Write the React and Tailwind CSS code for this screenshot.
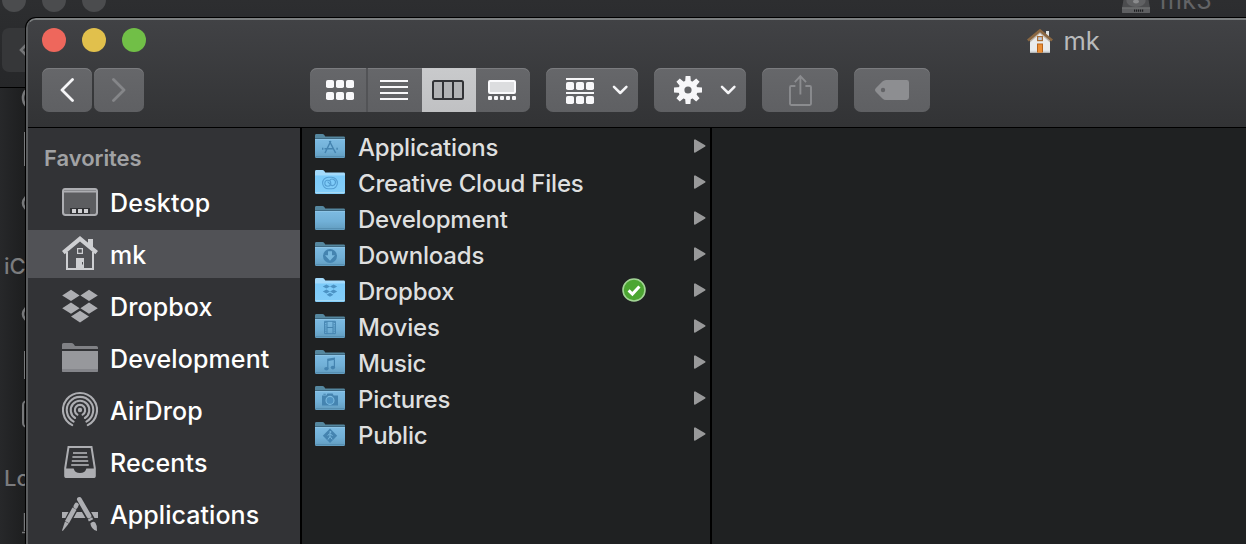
import React from "react";

const deep = "#4584b0";

const glyphs = {
  apps: (
    <g stroke={deep} strokeWidth="1.5" fill="none">
      <path d="M15.8 7 10 19M14.4 7 20.6 19M9.5 14.8h8.5" />
      <path d="M7 14.8h1.4M21.4 14.8h1.4" strokeWidth="2" />
    </g>
  ),
  cloud: (
    <g stroke="#559fd3" strokeWidth="1.1" fill="none">
      <rect x="7.6" y="7.2" width="14.8" height="11.6" rx="5.8" />
      <circle cx="12.8" cy="13.2" r="3" />
      <path d="M12.6 11.6 16.4 15.4A3.2 3.2 0 1 0 14.6 10.6" />
    </g>
  ),
  none: null,
  down: (
    <g>
      <circle cx="15" cy="14" r="7" fill={deep} />
      <path d="M13 9.2h4v4h3L15 18.8 10 13.2h3z" fill="#78b8de" />
    </g>
  ),
  dropbox: (
    <path
      d="M11.4 6.6 15 8.6 11.4 10.6 7.8 8.6zM18.6 6.6 22.2 8.6 18.6 10.6 15 8.6zM11.4 11.4 15 13.4 11.4 15.4 7.8 13.4zM18.6 11.4 22.2 13.4 18.6 15.4 15 13.4zM15 14.8 18.4 16.8 15 18.8 11.6 16.8z"
      fill="#4c93c4"
    />
  ),
  film: (
    <g fill="none" stroke={deep}>
      <path d="M9.6 7.3h10.8v12.4H9.6zM12 7.3v12.4M18 7.3v12.4M12 13.5h6" strokeWidth="1" />
      <path d="M10.8 8v11.4M19.2 8v11.4" strokeWidth="1.2" strokeDasharray="1 1.2" />
    </g>
  ),
  music: (
    <g fill={deep}>
      <path d="M12.2 8.8 20 7.4v2.4l-6.6 1.2v8h-1.2zM18.8 8h1.2v9.6h-1.2z" />
      <ellipse cx="11.4" cy="18.8" rx="2.2" ry="1.8" />
      <ellipse cx="17.9" cy="17.6" rx="2.2" ry="1.8" />
    </g>
  ),
  camera: (
    <g>
      <path d="M7 9.4h4.4l1-1.8h5.2l1 1.8H23v10.2H7zM8.4 7.8h2.4v1H8.4z" fill={deep} />
      <circle cx="15" cy="14.4" r="4" fill="#4f93c2" stroke="#7bbbe0" strokeWidth="1.1" />
    </g>
  ),
  sign: (
    <g>
      <path d="M15 6.6 22.2 13.8 15 21 7.8 13.8z" fill={deep} />
      <circle cx="15.4" cy="10" r="1" fill="#78b8de" />
      <path d="M15 11.4v3l-2 3.2M15 14.4l2.2 3M12.6 13.4l2.2-1.6 2.8 1.8" stroke="#78b8de" strokeWidth="1" fill="none" />
    </g>
  ),
};

function Folder({ kind, bright }) {
  return (
    <svg width="30" height="25" viewBox="0 0 30 25" className="block shrink-0">
      <defs>
        <linearGradient id="dim" x1="0" y1="0" x2="0" y2="1">
          <stop offset="0" stopColor="#7dbbe2" />
          <stop offset="0.55" stopColor="#71b0d7" />
          <stop offset="1" stopColor="#629cbf" />
        </linearGradient>
        <linearGradient id="lit" x1="0" y1="0" x2="0" y2="1">
          <stop offset="0" stopColor="#7ccbfa" />
          <stop offset="1" stopColor="#83cdf8" />
        </linearGradient>
      </defs>
      <path
        d="M0 1.4Q0 0 1.4 0H7.4Q8.6 0 9.3 1L10.3 2.6H28.8Q30 2.6 30 3.8V10H0z"
        fill={bright ? "#a3dafb" : "#55879f"}
      />
      {!bright && <path d="M0 4.2H30V5H0z" fill="#38617a" />}
      <path d="M0 5H30V22.8Q30 24 28.8 24H1.2Q0 24 0 22.8z" fill={bright ? "url(#lit)" : "url(#dim)"} />
      <path d="M0 5.5H30" stroke={bright ? "#8ed2fb" : "#8cc4e6"} strokeWidth="1" />
      <path d="M0.4 22.5H29.6" stroke={bright ? "#a6d9f4" : "#568fb2"} strokeWidth="1" />
      {glyphs[kind]}
    </svg>
  );
}

const g = "#adaeb2";

const sideIcons = {
  desktop: (
    <g>
      <rect x="1" y="11" width="34" height="26" rx="2.4" fill="#5c5d60" stroke={g} strokeWidth="2" />
      <path d="M1 12.2Q1 10.4 3 10.4H33Q35 10.4 35 12.2V14.6H1z" fill={g} />
      <path d="M2 12.5H34" stroke="#8b8c90" />
      <path d="M8 30H28V36H8z" fill="#323336" />
      <path d="M10 31h4v4h-4zM16 31h4v4h-4zM22 31h4v4h-4z" fill="#d0d0d3" />
    </g>
  ),
  home: (
    <g fill="#cecfd2">
      <path d="M18 6 36 21 33.4 24.2 18 11.6 2.6 24.2 0 21z" />
      <path d="M26 9h5v10l-5-4.4z" />
      <path d="M4 22h2v16h24V22h2v18H4z" />
      <path d="M15 18h6v6h-6zM16.2 19.2v3.6h3.6v-3.6z" fillRule="evenodd" />
      <path d="M14 28h8v11h-8z" />
      <path d="M20 32h1v2.4h-1z" fill="#505155" />
    </g>
  ),
  dropbox: (
    <path
      d="M9 7.8 17.6 13.4 9 19 0.2 13.4zM27 7.8 35.8 13.4 27 19 18.4 13.4zM9 20.6 17.6 26.2 9 31.8 0.2 26.2zM27 20.6 35.8 26.2 27 31.8 18.4 26.2zM18 28.8 27 34.6 18 40.4 9 34.6z"
      fill={g}
    />
  ),
  folder: (
    <g>
      <path d="M0 10.6Q0 9 1.6 9H9.4Q10.6 9 11.6 10L13 12H34.4Q36 12 36 13.6V15H0z" fill="#808185" />
      <path d="M0 17H36V36.4Q36 38 34.4 38H1.6Q0 38 0 36.4z" fill="#97989c" />
      <path d="M0 35H36V36.4Q36 38 34.4 38H1.6Q0 38 0 36.4z" fill="#84858a" />
    </g>
  ),
  airdrop: (
    <g fill="none" stroke={g} strokeWidth="2.1" strokeLinecap="round">
      <circle cx="18" cy="24" r="2.2" fill={g} stroke="none" />
      <path d="M15.4 28.6A5.2 5.2 0 1 1 20.6 28.6" />
      <path d="M13.1 32A9.3 9.3 0 1 1 22.9 32" />
      <path d="M11.6 35.6A13.2 13.2 0 1 1 24.4 35.6" />
      <path d="M10.2 39.1A17 17 0 1 1 25.8 39.1" />
    </g>
  ),
  recents: (
    <g>
      <path d="M6.5 9H29.5L32.8 30V38.2Q32.8 39 32 39H4Q3.2 39 3.2 38.2V30z" fill="none" stroke={g} strokeWidth="2" />
      <path d="M3 30.4H11.6Q13 35 18 35T24.4 30.4H33V38.6Q33 40 31.6 40H4.4Q3 40 3 38.6z" fill={g} />
      <path d="M11 15H25M10.4 19H25.6M9.8 23H26.2M9.2 27H26.8" stroke="#97989c" strokeWidth="2" />
    </g>
  ),
  apps: (
    <g>
      <path d="M0 22H36V28H0z" fill={g} />
      <g stroke="#323336" strokeWidth="7.6" strokeLinecap="round">
        <path d="M14.5 15 4.5 34" />
        <path d="M18 10 31 33" />
      </g>
      <path d="M12 15 18 17.5 25 30H7z" fill="#323336" />
      <path d="M11 22H23.5L26 28H8z" fill={g} />
      <g stroke="#323336" strokeWidth="6.6">
        <path d="M13.6 17.5 5 33" />
        <path d="M18 12 29 31" />
      </g>
      <path d="M12.5 18.6 5 32.2" stroke={g} strokeWidth="4.6" />
      <path d="M14.6 14.8 13.6 16.6" stroke={g} strokeWidth="4.4" strokeLinecap="round" />
      <path d="M3 31.4 6.8 33.6 1.2 40.6Q0 41.4 0.2 40z" fill={g} />
      <path d="M17.4 9.4 27 26" stroke={g} strokeWidth="4.8" strokeLinecap="round" />
      <path d="M28 28.4 29 30.4" stroke={g} strokeWidth="4.8" />
      <path d="M28.4 33.4Q31 30.6 33.4 32.8 35.6 36 35 41 29 39 28.4 33.4z" fill={g} />
    </g>
  ),
};

const sidebar = [
  { name: "Desktop", icon: "desktop", track: "tracking-[0.2px]" },
  { name: "mk", icon: "home", active: true, track: "tracking-[0px]" },
  { name: "Dropbox", icon: "dropbox", track: "tracking-[0.1px]" },
  { name: "Development", icon: "folder", track: "tracking-[0.12px]" },
  { name: "AirDrop", icon: "airdrop", track: "tracking-[0.1px]" },
  { name: "Recents", icon: "recents", track: "tracking-[0.15px]" },
  { name: "Applications", icon: "apps", track: "tracking-[0.06px]" },
];

const files = [
  { name: "Applications", kind: "apps" },
  { name: "Creative Cloud Files", kind: "cloud", bright: true },
  { name: "Development", kind: "none" },
  { name: "Downloads", kind: "down" },
  { name: "Dropbox", kind: "dropbox", bright: true, synced: true },
  { name: "Movies", kind: "film" },
  { name: "Music", kind: "music" },
  { name: "Pictures", kind: "camera" },
  { name: "Public", kind: "sign" },
];

const btn =
  "flex h-11 shrink-0 items-center rounded-[7px] bg-linear-to-b from-[#66676a] to-[#5f6063] shadow-[inset_0_1px_0_#7b7c7f]";

function Chevron() {
  return (
    <svg width="16" height="10" viewBox="0 0 16 10" className="block">
      <path d="M2 1.8 8.2 8 14.4 1.8" fill="none" stroke="#f5f5f7" strokeWidth="2.5" strokeLinecap="round" strokeLinejoin="round" />
    </svg>
  );
}

function Squares({ y }) {
  return (
    <>
      <rect x="0" y={y} width="8" height="8" rx="1.8" />
      <rect x="10" y={y} width="8" height="8" rx="1.8" />
      <rect x="20" y={y} width="8" height="8" rx="1.8" />
    </>
  );
}

function Toolbar() {
  return (
    <div className="flex pl-[14px]">
      <div className={`${btn} w-[50px] justify-center pr-px`}>
        <svg width="14" height="26" viewBox="0 0 14 26" className="block">
          <path d="M12.5 2.5 2 13 12.5 23.5" fill="none" stroke="#f5f5f7" strokeWidth="2.8" strokeLinecap="round" strokeLinejoin="round" />
        </svg>
      </div>
      <div className={`${btn} ml-[2px] w-[50px] justify-center`}>
        <svg width="14" height="26" viewBox="0 0 14 26" className="block">
          <path d="M1.5 2.5 12 13 1.5 23.5" fill="none" stroke="#858689" strokeWidth="2.8" strokeLinecap="round" strokeLinejoin="round" />
        </svg>
      </div>

      <div className={`${btn} ml-[166px] w-[220px] overflow-hidden`}>
        <div className="flex h-11 w-[58px] items-center justify-center border-r-2 border-[#525356] pl-1">
          <svg width="28" height="20" viewBox="0 0 28 20" fill="#f7f7f9" className="block">
            <Squares y="0" />
            <Squares y="12" />
          </svg>
        </div>
        <div className="flex h-11 w-[54px] items-center pb-px pl-3">
          <svg width="28" height="22" viewBox="0 0 28 22" className="block">
            <path d="M0 2H28M0 8H28M0 14H28M0 20H28" stroke="#f7f7f9" strokeWidth="2" />
          </svg>
        </div>
        <div className="flex h-11 w-[54px] items-center bg-linear-to-b from-[#c9cacc] to-[#c0c1c3] pl-[10px]">
          <svg width="32" height="20" viewBox="0 0 32 20" className="block">
            <rect x="1" y="1" width="30" height="18" rx="1.5" fill="#b2b3b5" stroke="#323336" strokeWidth="2" />
            <path d="M11 1V19M21 1V19" stroke="#323336" strokeWidth="2" />
          </svg>
        </div>
        <div className="flex h-11 w-[54px] items-center pl-3">
          <svg width="28" height="20" viewBox="0 0 28 20" className="block">
            <rect x="1" y="1" width="26" height="12" rx="1" fill="#dcdddf" stroke="#fbfbfd" strokeWidth="2" />
            <g fill="#f7f7f9">
              <rect x="0" y="16" width="4" height="4" rx="1" />
              <rect x="6" y="16" width="4" height="4" rx="1" />
              <rect x="12" y="16" width="4" height="4" rx="1" />
              <rect x="18" y="16" width="4" height="4" rx="1" />
              <rect x="24" y="16" width="4" height="4" rx="1" />
            </g>
          </svg>
        </div>
      </div>

      <div className={`${btn} ml-4 w-[92px] gap-[18px] pl-5`}>
        <svg width="28" height="26" viewBox="0 0 28 26" fill="#f7f7f9" className="mt-[2px] block">
          <rect width="28" height="2" />
          <Squares y="4" />
          <rect y="14" width="28" height="2" />
          <Squares y="18" />
        </svg>
        <Chevron />
      </div>

      <div className={`${btn} ml-4 w-[92px] gap-[18px] pl-5`}>
        <svg width="28" height="28" viewBox="-14 -14 28 28" className="block">
          <g fill="#f7f7f9">
            <path d="M-2.4-14H2.4L3-7H-3zM-2.4 14H2.4L3 7H-3z" />
            <path d="M-2.4-14H2.4L3-7H-3zM-2.4 14H2.4L3 7H-3z" transform="rotate(45)" />
            <path d="M-2.4-14H2.4L3-7H-3zM-2.4 14H2.4L3 7H-3z" transform="rotate(90)" />
            <path d="M-2.4-14H2.4L3-7H-3zM-2.4 14H2.4L3 7H-3z" transform="rotate(135)" />
          </g>
          <circle r="6.6" fill="#646568" stroke="#f7f7f9" strokeWidth="6" />
        </svg>
        <Chevron />
      </div>

      <div className={`${btn} ml-4 w-[76px] justify-center pr-px`}>
        <svg width="24" height="32" viewBox="0 0 24 32" className="block" fill="none" stroke="#8b8c8f" strokeWidth="1.9">
          <path d="M7.4 12H3.2Q2 12 2 13.2V29.8Q2 31 3.2 31H21.8Q23 31 23 29.8V13.2Q23 12 21.8 12H17.4" />
          <path d="M12.4 20.5V2.5M6.8 8.2 12.4 2.2 18 8.2" />
        </svg>
      </div>

      <div className={`${btn} ml-4 w-[76px] justify-center`}>
        <svg width="34" height="20" viewBox="0 0 34 20" className="block">
          <path d="M11 0H31.6Q34 0 34 2.4V17.6Q34 20 31.6 20H11Q9 20 7.4 18.4L1 12Q-1 10 1 8L7.4 1.6Q9 0 11 0z" fill="#8d8e91" />
          <circle cx="8" cy="10" r="2.2" fill="#636467" />
        </svg>
      </div>
    </div>
  );
}

function TitleHouse() {
  return (
    <svg width="26" height="26" viewBox="0 0 26 26" className="block shrink-0">
      <path d="M19 3h3v7h-3z" fill="#dfe3e4" />
      <path d="M13 3 23 12V24.6H3V12z" fill="#e9ebec" />
      <path d="M3 22.8H23V24.6H3z" fill="#d4d7d9" />
      <path d="M13 3 23 12V14.4L13 5.6 3 14.4V12z" fill="#b9b2a9" />
      <path d="M13 0.8 26 11.6 24.2 13.6 13 4.2 1.8 13.6 0 11.6z" fill="#8a6742" />
      <rect x="10.6" y="8.6" width="4.8" height="4" fill="#b9c9dc" stroke="#a96d35" strokeWidth="1.2" />
      <path d="M10 15.4h6v9.2h-6z" fill="#b8641a" />
      <path d="M11 16.4h4v8.2h-4z" fill="#eb8f36" />
    </svg>
  );
}

function BackWindow() {
  return (
    <div className="absolute inset-0 bg-[#232426]">
      <div className="relative h-[88px] overflow-hidden border-b border-black bg-linear-to-b from-[#2d2e30] to-[#262729]">
        <div className="absolute top-[-12px] left-[2px] flex gap-4">
          <div className="size-6 rounded-full bg-[#4b4c4e]" />
          <div className="size-6 rounded-full bg-[#4b4c4e]" />
          <div className="size-6 rounded-full bg-[#4b4c4e]" />
        </div>
        <div className="absolute top-[28px] left-[2px] flex h-11 w-[50px] items-center rounded-[7px] bg-[#363739] pl-[17px]">
          <svg width="14" height="16" viewBox="0 0 14 16">
            <path d="M8 2 2 8 8 14" fill="none" stroke="#747577" strokeWidth="2.6" />
          </svg>
        </div>
        <div className="absolute top-[-14px] left-[1122px] flex items-end">
          <svg width="28" height="28" viewBox="0 0 28 28" className="block">
            <path d="M4 0H24L28 22H0z" fill="#4c4d4f" />
            <ellipse cx="14" cy="15" rx="9.6" ry="6" fill="#606163" />
            <ellipse cx="14" cy="15.6" rx="3" ry="1.8" fill="#8a8b8d" />
            <path d="M0 21.6H28V26.4Q28 27 27 27H1Q0 27 0 26.4z" fill="#5e5f61" />
            <path d="M0 22H28" stroke="#7c7d7f" strokeWidth="0.8" />
            <path d="M12 24.6H22" stroke="#1e1f21" strokeWidth="2.2" strokeDasharray="1.2 0.8" />
          </svg>
          <span className="ml-[10px] text-[25px] leading-[28px] tracking-[0.3px] text-[#636466]">mk3</span>
        </div>
      </div>
      <div className="relative h-[456px] w-[25px] overflow-hidden bg-linear-to-r from-[#27282a] to-[#1d1e1f] text-[22px] leading-7 font-medium text-[#7b7c7e]">
        <svg width="25" height="456" viewBox="0 0 25 456" className="absolute inset-0" fill="none" stroke="#77787a" strokeWidth="2.6">
          <circle cx="34" cy="10" r="11" />
          <path d="M24.5 44V78" strokeWidth="1" />
          <circle cx="30" cy="115" r="7" />
          <circle cx="30" cy="226" r="7" />
          <path d="M24.5 263V291" strokeWidth="1" />
          <rect x="23" y="313" width="20" height="26" rx="4" strokeWidth="2" />
          <path d="M24.5 425V443M22 444.5H25" strokeWidth="1.4" />
        </svg>
        <div className="pt-[164px] pl-1 whitespace-nowrap">iC</div>
        <div className="pt-[184px] pl-1 whitespace-nowrap">Lo</div>
      </div>
    </div>
  );
}

export default function App() {
  return (
    <div className="relative h-[544px] w-[1246px] overflow-hidden bg-black font-['Inter','Liberation_Sans',sans-serif]">
      <BackWindow />
      <div className="absolute top-[17px] left-[25px] h-[527px] w-[1221px] overflow-hidden rounded-tl-[11px] border-t border-l border-black bg-[#3c3d40]">
        <div className="flex h-full flex-col overflow-hidden rounded-tl-[10px] border-t-2 border-l-2 border-t-[#7c7f80] border-l-[#5b5d5f]">
          <header className="h-[108px] shrink-0 border-b border-black bg-linear-to-b from-[#414245] to-[#323335]">
            <div className="flex h-12 items-start pt-2 pl-[14px]">
              <div className="flex gap-4">
                <div className="size-6 rounded-full bg-[#ee675c]" />
                <div className="size-6 rounded-full bg-[#e1c04c]" />
                <div className="size-6 rounded-full bg-[#71bf47]" />
              </div>
              <div className="ml-[881px] flex items-center">
                <TitleHouse />
                <span className="ml-[10.5px] text-[25.5px] leading-[26px] text-[#b9babb]">mk</span>
              </div>
            </div>
            <Toolbar />
          </header>

          <div className="flex min-h-0 flex-1">
            <aside className="w-[274px] shrink-0 border-r-2 border-black bg-[#323336]">
              <h2 className="h-[50px] pt-4 pl-4 text-[22px] leading-7 font-semibold tracking-[-0.05px] text-[#a1a2a4]">Favorites</h2>
              <ul className="flex flex-col gap-1">
                {sidebar.map((s) => (
                  <li key={s.name} className={`flex h-12 items-center pl-[34px] ${s.active ? "bg-[#515256]" : ""}`}>
                    <svg width="36" height="48" viewBox="0 0 36 48" className="block shrink-0">
                      {sideIcons[s.icon]}
                    </svg>
                    <span className={`ml-3 pt-[2px] text-[25px] leading-8 font-medium whitespace-nowrap text-white ${s.track}`}>{s.name}</span>
                  </li>
                ))}
              </ul>
            </aside>

            <ul className="w-[410px] shrink-0 border-r-2 border-black bg-[#1f2122]">
              {files.map((f) => (
                <li key={f.name} className="flex h-9 items-center pr-[4px] pl-[13px]">
                  <Folder kind={f.kind} bright={f.bright} />
                  <span className="ml-[13px] flex-1 pt-[3px] text-[24px] leading-8 font-[450] tracking-[-0.2px] whitespace-nowrap text-[#dedfdf]">{f.name}</span>
                  {f.synced && (
                    <svg width="24" height="24" viewBox="0 0 24 24" className="mr-[48px] block">
                      <circle cx="12" cy="12" r="11" fill="#4ca632" stroke="#a2d495" strokeWidth="1.6" />
                      <path d="M6.6 12.4 10.4 16 17.4 8.4" fill="none" stroke="#fff" strokeWidth="3" />
                    </svg>
                  )}
                  <svg width="12" height="14" viewBox="0 0 12 14" className="block">
                    <path d="M0.6 0.6Q0.6 0 1.4 0.4L11.2 6.2Q12 7 11.2 7.6L1.4 13.6Q0 14 0 13V1z" fill="#98999a" />
                  </svg>
                </li>
              ))}
            </ul>
            <div className="flex-1 bg-[#1f2122]" />
          </div>
        </div>
      </div>
    </div>
  );
}
